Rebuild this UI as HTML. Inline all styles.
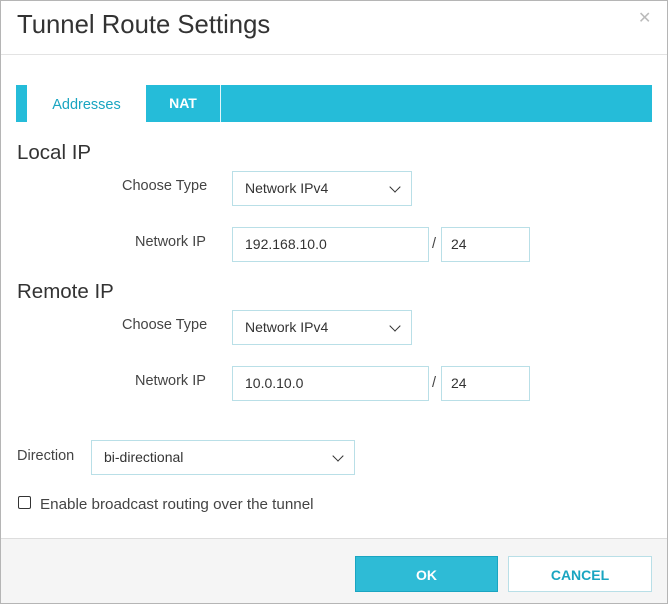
<!DOCTYPE html>
<html><head><style>
*{box-sizing:border-box;margin:0;padding:0}
body{width:668px;height:604px;background:#fff;font-family:"Liberation Sans",sans-serif;color:#333;position:relative;overflow:hidden}
.frame{position:absolute;left:0;top:0;width:668px;height:604px;border:1px solid #b5b5b5}
.abs{position:absolute}
.title{left:17px;top:11px;font-size:25.7px;color:#333}
.close{left:638px;top:8px;font-size:16px;color:#bbb}
.hline{left:1px;width:666px;height:1px;background:#e3e3e3}
.tabbar{left:16px;top:85px;width:636px;height:37px;background:#25bcd9}
.tab1{left:27px;top:85px;width:119px;height:38px;background:#fff;color:#1aa5c1;font-size:14.5px;text-align:center;line-height:40px}
.tab2{left:146px;top:85px;width:75px;height:37px;color:#fff;font-weight:bold;font-size:14px;text-align:center;line-height:37px;border-right:1px solid #e0f6fb}
.h{font-size:20.5px;color:#333}
.lbl{font-size:14.5px;color:#444}
.inp{border:1px solid #b9dfe7;background:#fff;font-size:14px;color:#333;padding-left:12px;line-height:33px;height:35px}
.sel::after{content:"";position:absolute;right:12px;top:11px;width:7px;height:7px;border-right:1.3px solid #333;border-bottom:1.3px solid #333;transform:rotate(45deg)}
.footer{left:1px;top:538px;width:666px;height:65px;background:#f5f5f5;border-top:1px solid #ddd}
.btn{height:36px;font-weight:bold;font-size:14px;text-align:center;line-height:36px}
</style></head><body>
<div class="abs title">Tunnel Route Settings</div>
<div class="abs close">✕</div>
<div class="abs hline" style="top:54px"></div>
<div class="abs tabbar"></div>
<div class="abs tab1">Addresses</div>
<div class="abs tab2">NAT</div>

<div class="abs h" style="left:17px;top:141px">Local IP</div>
<div class="abs lbl" style="left:122px;top:178px">Choose Type</div>
<div class="abs inp sel" style="left:232px;top:171px;width:180px">Network IPv4</div>
<div class="abs lbl" style="left:135px;top:234px">Network IP</div>
<div class="abs inp" style="left:232px;top:227px;width:197px">192.168.10.0</div>
<div class="abs lbl" style="left:432px;top:236px">/</div>
<div class="abs inp" style="left:441px;top:227px;width:89px;padding-left:9px">24</div>

<div class="abs h" style="left:17px;top:280px">Remote IP</div>
<div class="abs lbl" style="left:122px;top:317px">Choose Type</div>
<div class="abs inp sel" style="left:232px;top:310px;width:180px">Network IPv4</div>
<div class="abs lbl" style="left:135px;top:373px">Network IP</div>
<div class="abs inp" style="left:232px;top:366px;width:197px">10.0.10.0</div>
<div class="abs lbl" style="left:432px;top:375px">/</div>
<div class="abs inp" style="left:441px;top:366px;width:89px;padding-left:9px">24</div>

<div class="abs lbl" style="left:17px;top:448px">Direction</div>
<div class="abs inp sel" style="left:91px;top:440px;width:264px">bi-directional</div>

<div class="abs" style="left:18px;top:496px;width:13px;height:13px;border:1px solid #333;border-radius:2px"></div>
<div class="abs lbl" style="left:40px;top:496px;font-size:15.2px">Enable broadcast routing over the tunnel</div>

<div class="abs footer"></div>
<div class="abs btn" style="left:355px;top:556px;width:143px;background:#2ebbd6;border:1px solid #1aa5c1;color:#fff">OK</div>
<div class="abs btn" style="left:508px;top:556px;width:144px;background:#fff;border:1px solid #b9dfe7;color:#1aa5c1">CANCEL</div>
<div class="frame"></div>
</body></html>
